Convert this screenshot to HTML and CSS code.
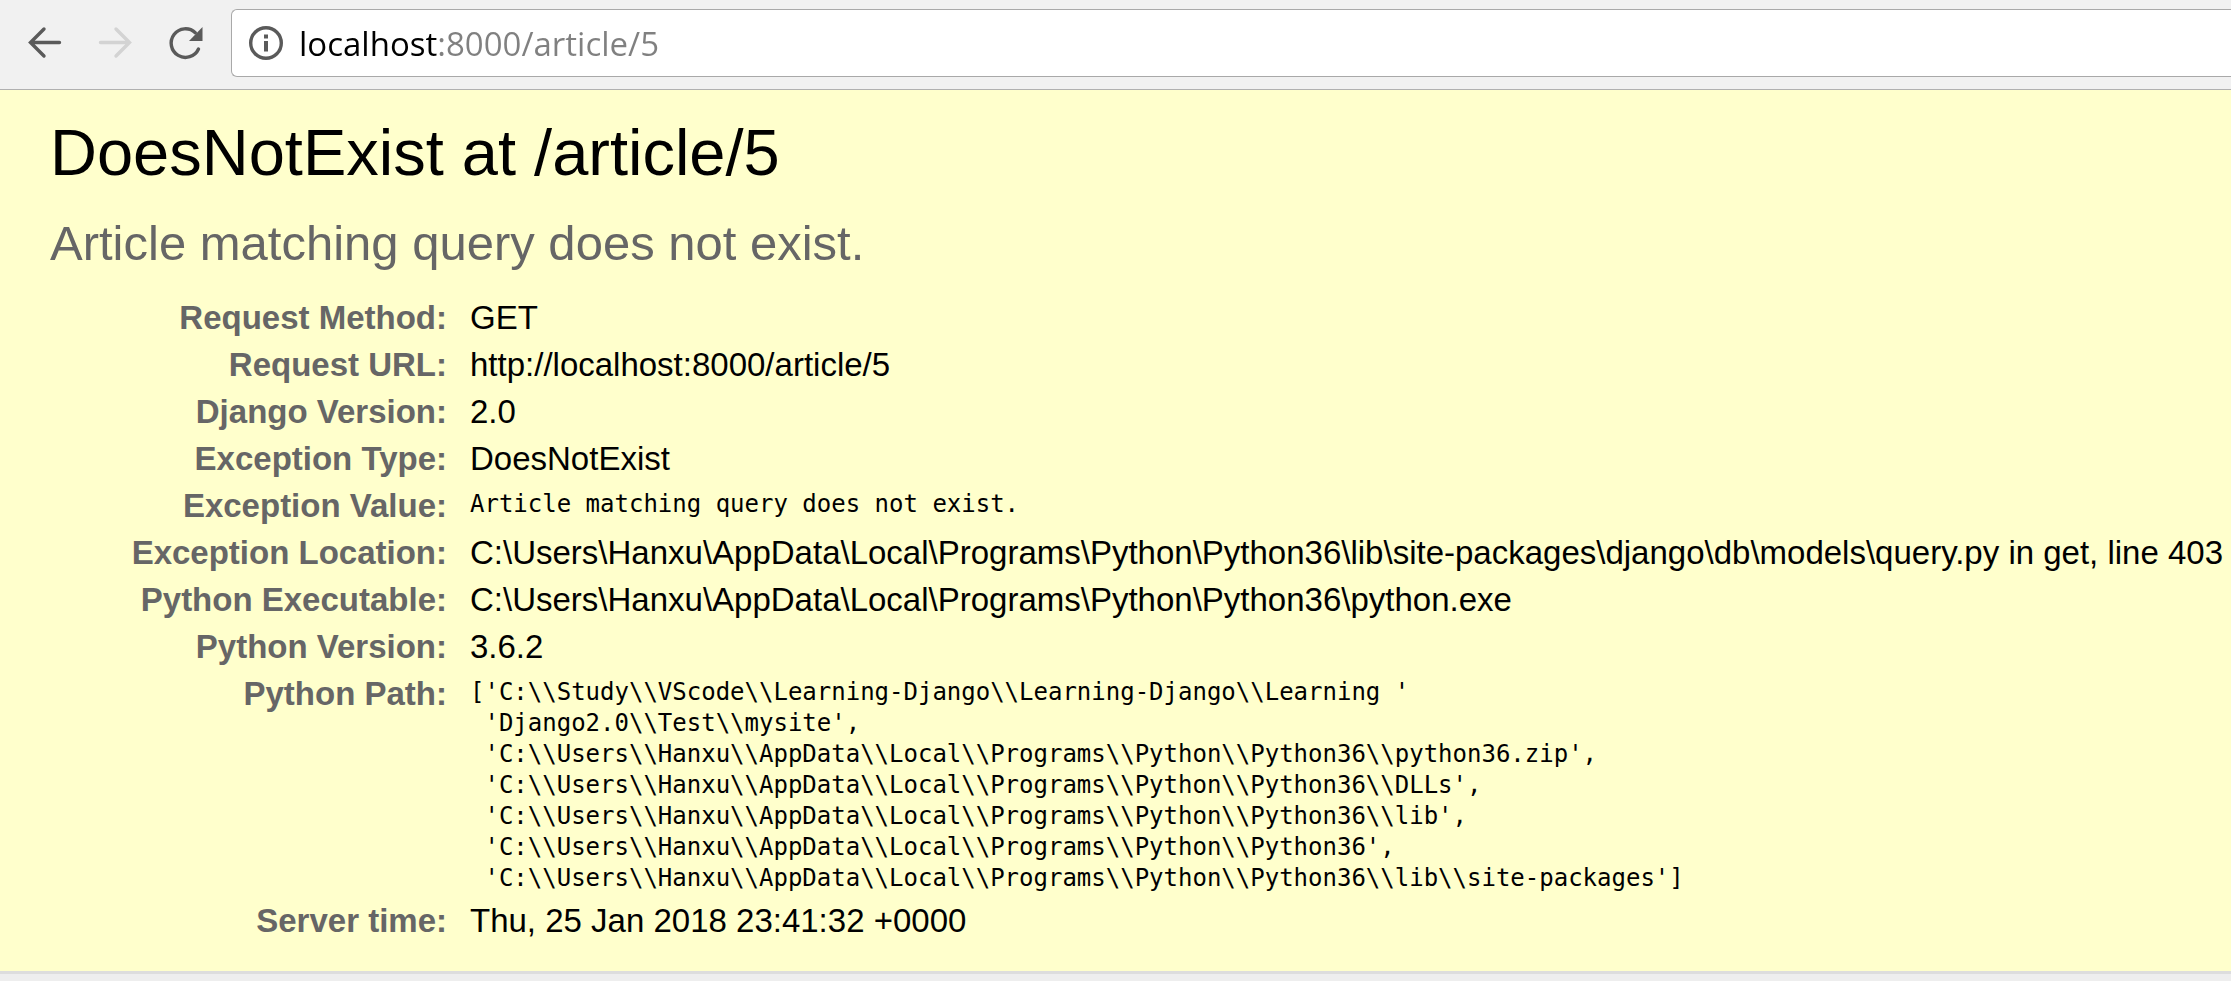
FILE: index.html
```html
<!DOCTYPE html>
<html lang="en">
<head>
<meta charset="utf-8">
<title>DoesNotExist at /article/5</title>
<link rel="stylesheet" href="styles.css">
</head>
<body>
<nav class="toolbar" aria-label="Browser">
  <div class="nav-buttons">
    <button class="nav-button" type="button" aria-label="Back">
      <svg class="icon" viewBox="0 0 36 36"><path d="M32.500 17.500H4M17 4L3.500 17.500L17 31"/></svg>
    </button>
    <button class="nav-button nav-button-disabled" type="button" aria-label="Forward" disabled>
      <svg class="icon" viewBox="0 0 36 36"><path d="M3.500 17.500H32M19 4L32.500 17.500L19 31"/></svg>
    </button>
    <button class="nav-button" type="button" aria-label="Reload">
      <svg class="icon" viewBox="0 0 36 36"><path d="M31.500 24A14.300 14.300 0 1 1 28.300 7.700"/><path class="solid" d="M35.500 2V16H22Z"/></svg>
    </button>
  </div>
  <div class="address">
    <svg class="icon" viewBox="0 0 36 36" aria-hidden="true"><circle cx="18" cy="18" r="15.300"/><path class="solid" d="M16 9.500h4v4h-4zM16 16h4v10.500h-4z"/></svg>
    <input class="url" type="text" aria-label="Address" value="localhost:8000/article/5" spellcheck="false">
  </div>
</nav>
<main class="summary">
  <h1 class="title">DoesNotExist at /article/5</h1>
  <p class="message">Article matching query does not exist.</p>
  <table class="meta">
    <tr><th scope="row">Request Method:</th><td>GET</td></tr>
    <tr><th scope="row">Request URL:</th><td>http://localhost:8000/article/5</td></tr>
    <tr><th scope="row">Django Version:</th><td>2.0</td></tr>
    <tr><th scope="row">Exception Type:</th><td>DoesNotExist</td></tr>
    <tr><th scope="row">Exception Value:</th><td class="code"><pre>Article matching query does not exist.</pre></td></tr>
    <tr><th scope="row">Exception Location:</th><td>C:\Users\Hanxu\AppData\Local\Programs\Python\Python36\lib\site-packages\django\db\models\query.py in get, line 403</td></tr>
    <tr><th scope="row">Python Executable:</th><td>C:\Users\Hanxu\AppData\Local\Programs\Python\Python36\python.exe</td></tr>
    <tr><th scope="row">Python Version:</th><td>3.6.2</td></tr>
    <tr><th scope="row">Python Path:</th><td class="code"><pre>['C:\\Study\\VScode\\Learning-Django\\Learning-Django\\Learning '
 'Django2.0\\Test\\mysite',
 'C:\\Users\\Hanxu\\AppData\\Local\\Programs\\Python\\Python36\\python36.zip',
 'C:\\Users\\Hanxu\\AppData\\Local\\Programs\\Python\\Python36\\DLLs',
 'C:\\Users\\Hanxu\\AppData\\Local\\Programs\\Python\\Python36\\lib',
 'C:\\Users\\Hanxu\\AppData\\Local\\Programs\\Python\\Python36',
 'C:\\Users\\Hanxu\\AppData\\Local\\Programs\\Python\\Python36\\lib\\site-packages']</pre></td></tr>
    <tr><th scope="row">Server time:</th><td>Thu, 25 Jan 2018 23:41:32 +0000</td></tr>
  </table>
</main>
</body>
</html>
```

FILE: styles.css
```css
* {
  box-sizing: border-box;
}

body {
  margin: 0;
  background: #eee;
  color: #000;
  font-family: "Liberation Sans", Arial, sans-serif;
  font-size: 33px;
  line-height: 37px;
}

.toolbar {
  display: flex;
  align-items: center;
  gap: 28px;
  padding: 9px 0 12px 27px;
  background: #f1f1f1;
  border-bottom: 1px solid #b0b0b0;
}

.nav-buttons {
  display: flex;
  flex: none;
  gap: 34px;
}

.nav-button {
  display: flex;
  flex: none;
  padding: 0;
  border: 0;
  background: none;
  color: #5a5a5a;
}

.nav-button-disabled {
  color: #d3d3d3;
}

.icon {
  flex: none;
  width: 36px;
  height: 36px;
  fill: none;
  stroke: currentColor;
  stroke-width: 3.4;
  stroke-linecap: round;
}

.icon .solid {
  fill: currentColor;
  stroke: none;
}

.address {
  display: flex;
  flex: 1;
  align-items: center;
  gap: 15px;
  height: 68px;
  padding-left: 16px;
  background: #fff;
  border: 1px solid #a9a9a9;
  border-right: 0;
  border-radius: 6px 0 0 6px;
  color: #5a5a5a;
}

/* The host is drawn black and the rest of the address grey. */
.url {
  flex: 1;
  min-width: 0;
  height: 48px;
  padding: 0;
  border: 0;
  outline: 0;
  background: linear-gradient(to right, #000 138px, #808080 138px);
  background-clip: text;
  -webkit-background-clip: text;
  color: transparent;
  caret-color: #000;
  font-family: "Open Sans", "Noto Sans", sans-serif;
  font-size: 33px;
}

.summary {
  padding: 25px 0 27px 50px;
  background: #ffffcc;
  border-bottom: 3px solid #ddd;
}

.title {
  margin: 0 0 25px;
  font-size: 65px;
  font-weight: 400;
  line-height: 75px;
}

.message {
  margin: 0 0 23px;
  color: #666;
  font-size: 49px;
  line-height: 56px;
}

.meta {
  width: 100%;
  border-collapse: collapse;
}

.meta th,
.meta td {
  padding: 5px 0;
  text-align: left;
  vertical-align: top;
}

.meta th {
  width: 412px;
  padding-right: 15px;
  color: #666;
  text-align: right;
}

.meta td {
  padding-left: 8px;
}

.meta .code {
  padding-top: 7px;
  padding-bottom: 3px;
}

.meta pre {
  margin: 0;
  font-family: "DejaVu Sans Mono", monospace;
  font-size: 24px;
  line-height: 31px;
}
```
